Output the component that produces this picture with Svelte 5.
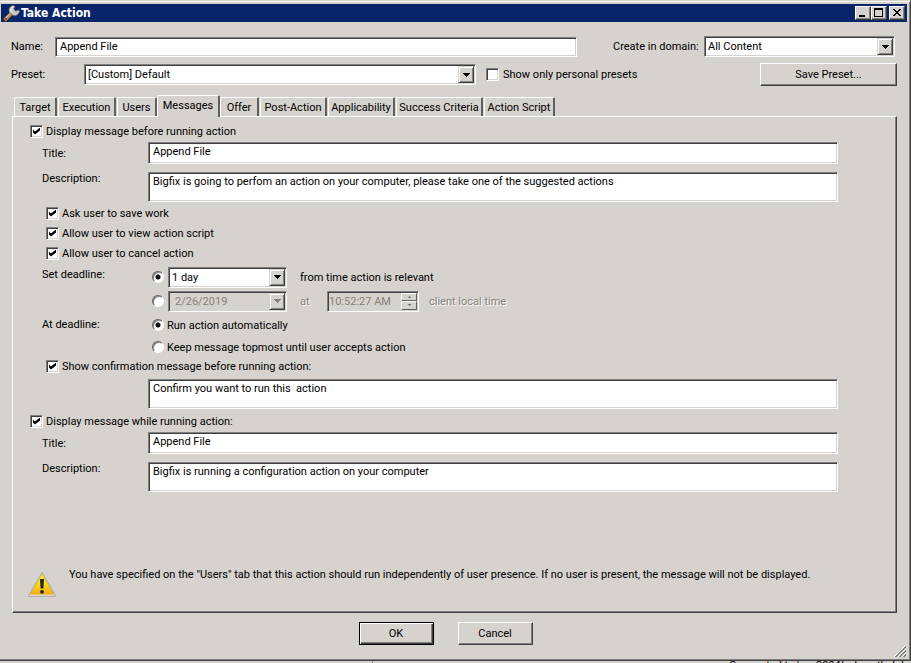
<script>
  const tabs = [
    { name: 'Target', width: 43 },
    { name: 'Execution', width: 58 },
    { name: 'Users', width: 40 },
    { name: 'Messages', width: 63 },
    { name: 'Offer', width: 39 },
    { name: 'Post-Action', width: 67 },
    { name: 'Applicability', width: 67 },
    { name: 'Success Criteria', width: 87 },
    { name: 'Action Script', width: 71 }
  ];
  let active = $state('Messages');
  let deadline = $state('relative');
  let atDeadline = $state('run');
  let before = $state('Bigfix is going to perfom an action on your computer, please take one of the suggested actions');
  let confirmation = $state('Confirm you want to run this  action');
  let running = $state('Bigfix is running a configuration action on your computer');
</script>

{#snippet arrow()}
  <span class="arrow" aria-hidden="true">
    <svg width="7" height="4" viewBox="0 0 7 4" shape-rendering="crispEdges"><path d="M0 0h7v1H6v1H5v1H4v1H3V3H2V2H1V1H0z" /></svg>
  </span>
{/snippet}

<div class="screen">
  <main class="window">
    <header class="titlebar">
      <svg class="wrench" width="17" height="17" viewBox="0 0 17 17">
        <path d="M2.5 14.5L9.5 7.5" stroke="#40302a" stroke-width="5" stroke-linecap="round" />
        <path d="M2.8 14L9.5 7.3" stroke="#b98a68" stroke-width="3.2" stroke-linecap="round" />
        <path d="M2.2 13.4L8.6 7" stroke="#efd9c4" stroke-width="1" stroke-linecap="round" />
        <path d="M6.500 7.500C5 4 7 .8 10.500 .5L12 1.400 10.800 4 12.800 6.200 15.500 4.800 16.500 6.500C15.500 10 12.500 11.500 9.800 10.300z" fill="#c9c9c6" stroke="#66645f" stroke-width=".8" />
        <path d="M8 6.500C7.500 4 8.500 2.300 10.300 1.800" stroke="#fff" fill="none" />
        <circle cx="3" cy="13.800" r="1" fill="#504840" />
      </svg>
      <h1>Take Action</h1>
      <div class="caption">
        <button aria-label="Minimize"><svg width="12" height="10" shape-rendering="crispEdges"><path d="M2 7h6v2H2z" /></svg></button>
        <button aria-label="Maximize"><svg width="12" height="10" shape-rendering="crispEdges"><path d="M1 0h9v9H1zM2 2v6h7V2z" fill-rule="evenodd" /></svg></button>
        <button class="close" aria-label="Close"><svg width="12" height="10" shape-rendering="crispEdges"><path d="M2 1h2v1h1v1h2V2h1V1h2v1H9v1H8v1H7v1h1v1h1v1h1v1H8V7H7V6H5v1H4v1H2V7h1V6h1V5h1V4H4V3H3V2H2z" /></svg></button>
      </div>
    </header>

    <div class="top">
      <div class="line">
        <label class="name-label" for="name">Name:</label>
        <input class="sunken name" id="name" type="text" value="Append File" />
        <label class="domain-label" for="domain">Create in domain:</label>
        <span class="combo sunken domain">
          <select id="domain"><option>All Content</option></select>{@render arrow()}
        </span>
      </div>
      <div class="line">
        <label class="preset-label" for="preset">Preset:</label>
        <span class="combo sunken preset">
          <select id="preset"><option>[Custom] Default</option></select>{@render arrow()}
        </span>
        <label class="tick personal"><input type="checkbox" />Show only personal presets</label>
        <button class="btn save">Save Preset...</button>
      </div>
    </div>

    <div class="tabs" role="tablist">
      {#each tabs as tab}
        <button role="tab" class="tab" class:active={active === tab.name} aria-selected={active === tab.name} style:width="{tab.width}px" onclick={() => (active = tab.name)}>{tab.name}</button>
      {/each}
    </div>

    <section class="panel" role="tabpanel">
      <label class="tick"><input type="checkbox" checked />Display message before running action</label>
      <div class="field">
        <label class="mid" for="t1">Title:</label>
        <input class="sunken text" id="t1" type="text" value="Append File" />
      </div>
      <div class="field second">
        <label for="d1">Description:</label>
        <textarea class="sunken text" id="d1" bind:value={before}></textarea>
      </div>
      <div class="options">
        <label class="tick"><input type="checkbox" checked />Ask user to save work</label>
        <label class="tick"><input type="checkbox" checked />Allow user to view action script</label>
        <label class="tick"><input type="checkbox" checked />Allow user to cancel action</label>
      </div>

      <div class="group">
        <span class="caption-text" id="set">Set deadline:</span>
        <div role="radiogroup" aria-labelledby="set">
          <div class="choice tall">
            <input type="radio" bind:group={deadline} value="relative" aria-label="Relative deadline" />
            <span class="combo sunken when">
              <select aria-label="Time span"><option>1 day</option></select>{@render arrow()}
            </span>
            <span class="after">from time action is relevant</span>
          </div>
          <div class="choice tall off">
            <input type="radio" bind:group={deadline} value="absolute" aria-label="Absolute deadline" />
            <span class="combo sunken when">
              <select class="date" aria-label="Date" disabled><option>2/26/2019</option></select>{@render arrow()}
            </span>
            <span class="after at">at</span>
            <span class="time sunken">
              <input type="text" aria-label="Time" value="10:52:27 AM" disabled />
              <span class="spin">
                <button aria-label="Later" disabled><svg width="3" height="2"><path d="M1 0h1v1h1v1H0V1h1z" /></svg></button>
                <button aria-label="Earlier" disabled><svg width="3" height="2"><path d="M0 0h3v1H2v1H1V1H0z" /></svg></button>
              </span>
            </span>
            <span class="zone">client local time</span>
          </div>
        </div>
      </div>

      <div class="group">
        <span class="caption-text" id="atd">At deadline:</span>
        <div class="stack" role="radiogroup" aria-labelledby="atd">
          <label class="choice"><input type="radio" bind:group={atDeadline} value="run" />Run action automatically</label>
          <label class="choice"><input type="radio" bind:group={atDeadline} value="keep" />Keep message topmost until user accepts action</label>
        </div>
      </div>

      <div class="options confirm">
        <label class="tick"><input type="checkbox" checked />Show confirmation message before running action:</label>
      </div>
      <div class="field">
        <span></span>
        <textarea class="sunken text" aria-label="Confirmation message" bind:value={confirmation}></textarea>
      </div>

      <label class="tick while"><input type="checkbox" checked />Display message while running action:</label>
      <div class="field">
        <label class="mid" for="t2">Title:</label>
        <input class="sunken text" id="t2" type="text" value="Append File" />
      </div>
      <div class="field second">
        <label for="d2">Description:</label>
        <textarea class="sunken text" id="d2" bind:value={running}></textarea>
      </div>

      <div class="warning">
        <svg width="30" height="27" viewBox="0 0 30 27">
          <defs><linearGradient id="amber" x1="0" y1="0" x2="0" y2="1"><stop offset="0" stop-color="#fff23c" /><stop offset=".5" stop-color="#f8dc10" /><stop offset="1" stop-color="#f6a81c" /></linearGradient></defs>
          <path d="M15 1.500L28.800 25.300H1.200z" fill="#e9e6de" stroke="#a9a59c" stroke-linejoin="round" />
          <path d="M15 3.500L26.800 23.300H3.200z" fill="url(#amber)" stroke="#d8a800" stroke-width=".6" stroke-linejoin="round" />
          <path d="M13 8h4l-.6 9.500h-2.800z" fill="#26261c" />
          <circle cx="15" cy="20.800" r="1.900" fill="#26261c" />
        </svg>
        <p>You have specified on the "Users" tab that this action should run independently of user presence. If no user is present, the message will not be displayed.</p>
      </div>
    </section>

    <footer>
      <button class="btn default">OK</button>
      <button class="btn">Cancel</button>
      <svg class="grip" width="12" height="12" viewBox="0 0 12 12">
        <path d="M0 12L12 0M4 12L12 4M8 12L12 8" stroke="#fff" />
        <path d="M1 12L12 1M2 12L12 2M5 12L12 5M6 12L12 6M9 12L12 9M10 12L12 10" stroke="#808080" />
      </svg>
    </footer>
  </main>
  <div class="status"><span></span><span>Connected to 'ncv2804forbroothclphp'</span></div>
</div>

<style>
  :global(body) { background: #d6d3ce; }
  .screen, .screen * { box-sizing: border-box; }
  .screen {
    display: flex; flex-direction: column; height: 100vh; min-height: 640px; overflow: hidden;
    font: 11px/13px Roboto, Tahoma, "DejaVu Sans Condensed", sans-serif; color: #000; background: #d6d3ce;
  }
  button, input, select, textarea { font: inherit; color: inherit; margin: 0; border-radius: 0; }
  .window {
    flex: 1; min-height: 0; display: flex; flex-direction: column; padding: 2px 2px 0 1px;
    border-top: 1px solid #d6d3ce; border-right: 1px solid #404040; border-bottom: 1px solid #404040;
    box-shadow: inset 0 1px #fff, inset -1px -1px #808080;
  }
  .titlebar { display: flex; align-items: center; height: 18px; margin: 1px 1px 0 0; padding: 0 2px; background: #0a246a; color: #fff; }
  .wrench { fill: none; }
  h1 { flex: 1; margin: 0 0 0 1px; font: bold 12px/14px "DejaVu Sans Condensed", Tahoma, sans-serif; }
  .caption { display: flex; }
  .caption button {
    width: 16px; height: 14px; padding: 0 1px; display: flex; align-items: center; background: #d6d3ce;
    border: 1px solid; border-color: #fff #404040 #404040 #fff; box-shadow: inset -1px -1px #808080;
  }
  .caption .close { margin-left: 2px; }
  .caption svg { display: block; flex: none; }

  .sunken { border: 1px solid; border-color: #808080 #fff #fff #808080; box-shadow: inset 1px 1px #404040, inset -1px -1px #d6d3ce; background: #fff; outline: 0; }
  .top { padding: 14px 13px 0 10px; }
  .line { display: flex; align-items: center; height: 21px; }
  .line + .line { margin-top: 7px; }
  .name-label { width: 44px; }
  .name { flex: 1; height: 20px; padding: 0 4px; }
  .domain-label { margin: 0 5px 0 36px; width: 86px; white-space: nowrap; }
  .combo { position: relative; display: block; height: 21px; padding: 1px; }
  .combo select { appearance: none; display: block; width: 100%; height: 100%; border: 0; padding: 0 18px 0 2px; background: none; outline: 0; opacity: 1; }
  .arrow {
    position: absolute; top: 1px; right: 1px; bottom: 1px; width: 16px; display: flex; align-items: center; justify-content: center; pointer-events: none;
    background: #d6d3ce; border: 1px solid; border-color: #d6d3ce #404040 #404040 #d6d3ce; box-shadow: inset 1px 1px #fff, inset -1px -1px #808080;
  }
  .domain { width: 191px; }
  .preset-label { width: 73px; }
  .preset { flex: 0 1 392px; }
  .personal { margin-left: 10px; }
  .save { width: 137px; margin: 0 -2px 0 auto; }

  .tick { display: flex; align-items: center; height: 20px; white-space: nowrap; }
  .tick input {
    appearance: none; flex: none; width: 13px; height: 13px; margin-right: 3px; background: #fff;
    border: 1px solid; border-color: #808080 #fff #fff #808080; box-shadow: inset 1px 1px #404040, inset -1px -1px #d6d3ce;
  }
  .tick input:checked::before {
    content: ""; display: block; width: 7px; height: 7px; margin: 2px; background: #000;
    clip-path: polygon(0 28%, 28% 57%, 100% 0, 100% 43%, 28% 100%, 0 71%);
  }
  .personal input { margin-right: 4px; }
  .btn {
    height: 23px; padding: 0; background: #d6d3ce; border: 1px solid; border-color: #fff #404040 #404040 #fff; box-shadow: inset -1px -1px #808080;
  }

  .tabs { display: flex; align-items: flex-end; margin-top: 10px; padding-left: 13px; height: 21px; }
  .tab {
    flex: none; height: 19px; padding: 1px 0 0; white-space: nowrap; background: #d6d3ce; border: 1px solid; border-width: 1px 2px 0 1px;
    border-color: #fff #606060 #fff #fff; border-radius: 2px 2px 0 0; margin-right: 1px;
  }
  .tab.active { position: relative; height: 22px; margin: 0 0 -1px -1px; padding: 0 0 3px; }

  .panel {
    flex: 1; display: flex; flex-direction: column; margin: 0 11px 0 11px; padding: 4px 58px 14px 17px;
    border: 1px solid; border-color: #fff #404040 #404040 #fff; box-shadow: inset -1px -1px #808080;
  }
  .field { display: grid; grid-template-columns: 106px 1fr; margin: 1px 0 0 12px; }
  .field.second { margin-top: 8px; }
  .mid { align-self: center; }
  .text { width: 100%; padding: 2px 4px; resize: none; display: block; overflow: hidden; }
  input.text { height: 22px; padding-bottom: 5px; }
  textarea.text { height: 30px; }
  .options { margin: 1px 0 0 16px; }
  .group { display: grid; grid-template-columns: 110px 1fr; margin: 2px 0 0 12px; }
  .caption-text { padding-top: 3px; }
  .choice { display: flex; align-items: center; height: 20px; white-space: nowrap; }
  .choice.tall { height: 24px; }
  .stack { display: grid; gap: 2px; }
  .choice input[type="radio"] {
    appearance: none; flex: none; width: 12px; height: 12px; margin-right: 3px; border-radius: 50%; background: #fff;
    border: 1px solid; border-color: #606060 #fff #fff #606060; box-shadow: inset 1px 1px #808080;
  }
  .choice input[type="radio"]:checked { background: radial-gradient(circle at 5px 5px, #000 2px, #fff 3px); }
  .tall input[type="radio"] { margin-right: 4px; }
  .when { width: 119px; }
  .after { margin-left: 13px; }
  .off { color: #848078; text-shadow: 1px 1px #fff; }
  .off .sunken { background: #d6d3ce; }
  .off .date { padding-left: 5px; }
  .off svg { fill: #808080; }
  .off select, .off input { text-shadow: none; }
  .at { width: 27px; }
  .time { display: flex; width: 92px; height: 21px; padding: 1px; }
  .time input { flex: 1; min-width: 0; padding: 0; border: 0; background: none; }
  .spin { width: 16px; display: grid; grid-template-rows: 1fr 1fr; }
  .spin button { padding: 0; display: flex; align-items: center; justify-content: center; background: #d6d3ce; border: 1px solid; border-color: #fff #606060 #606060 #fff; }
  .zone { margin-left: 10px; }
  .confirm { margin-top: 0; }
  .confirm .tick { height: 18px; }
  .confirm + .field { margin-top: 4px; }
  .while { margin-top: 2px; }
  .warning { display: flex; margin: auto -50px 0 -3px; }
  .warning svg { flex: none; margin-top: 3px; }
  .warning p { margin: 0 0 0 12px; }

  footer { position: relative; display: flex; justify-content: center; gap: 24px; padding: 9px 18px 15px 0; }
  footer .btn { width: 75px; }
  footer .default { border-color: #000; box-shadow: inset 1px 1px #fff, inset -1px -1px #404040, inset -2px -2px #808080; }
  .grip { position: absolute; right: 2px; bottom: 3px; }
  .status { display: flex; height: 2px; overflow: hidden; }
  .status span { flex: none; }
  .status span:first-child { width: 373px; border-right: 1px solid #808080; }
  .status span:last-child { flex: 1; padding-left: 356px; white-space: nowrap; line-height: 9px; }
</style>
